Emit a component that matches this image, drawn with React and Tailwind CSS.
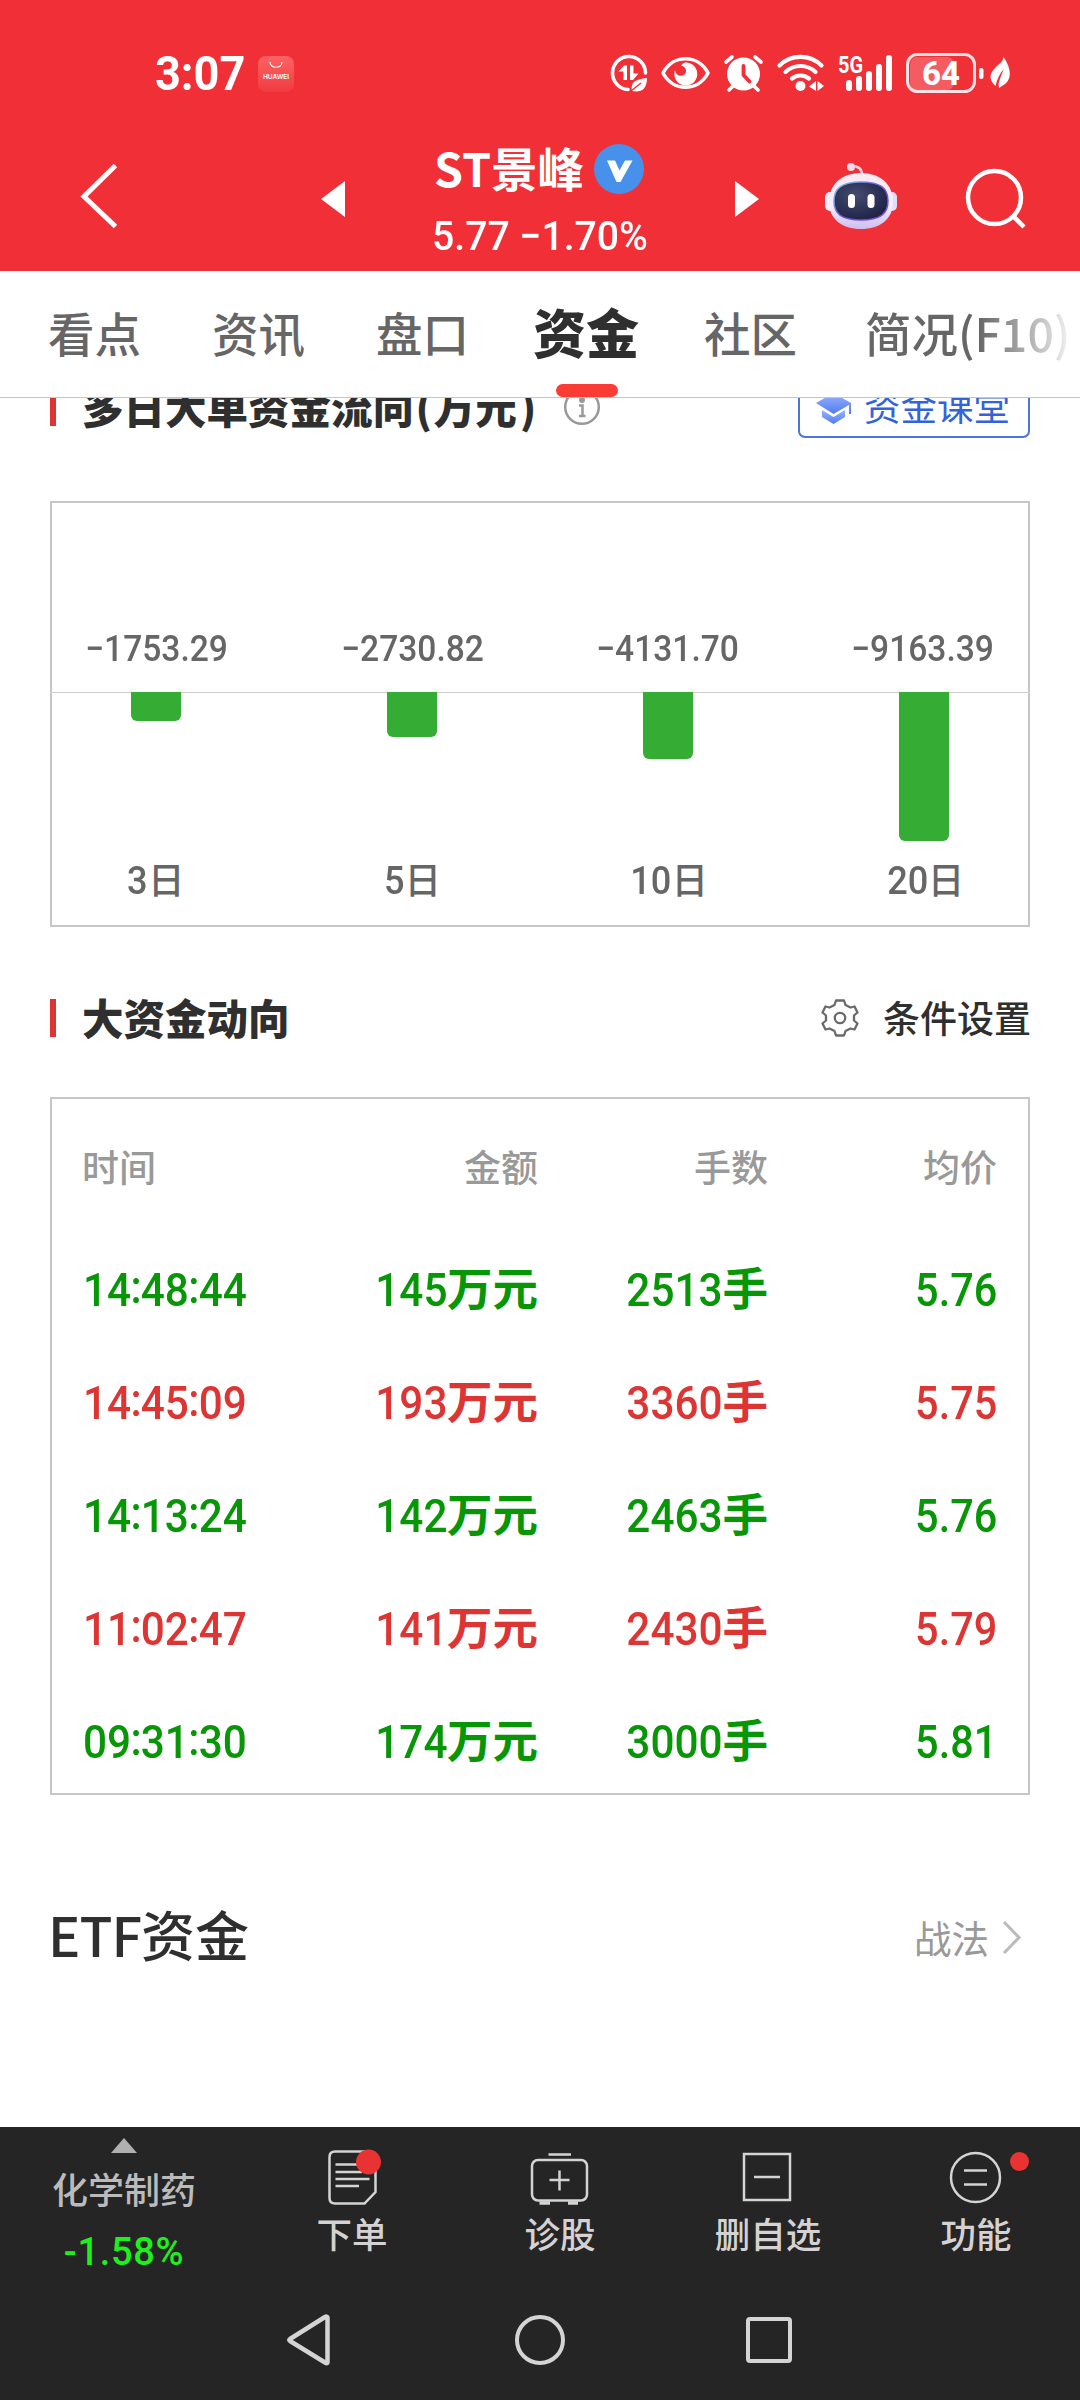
import React from "react";

const days = [
  { value: "−1753.29", n: "3", bar: "h-[29px]" },
  { value: "−2730.82", n: "5", bar: "h-[45px]" },
  { value: "−4131.70", n: "10", bar: "h-[67px]" },
  { value: "−9163.39", n: "20", bar: "h-[149px]" },
];

const trades = [
  { time: "14:48:44", amount: "145", lots: "2513", price: "5.76", color: "text-[#069606]" },
  { time: "14:45:09", amount: "193", lots: "3360", price: "5.75", color: "text-[#dd3434]" },
  { time: "14:13:24", amount: "142", lots: "2463", price: "5.76", color: "text-[#069606]" },
  { time: "11:02:47", amount: "141", lots: "2430", price: "5.79", color: "text-[#dd3434]" },
  { time: "09:31:30", amount: "174", lots: "3000", price: "5.81", color: "text-[#069606]" },
];

function Num({ children, className = "" }) {
  return (
    <span className={"inline-block font-['Roboto',sans-serif] " + className}>{children}</span>
  );
}

function StatusBar() {
  return (
    <div className="flex h-[96px] pt-[48px] text-white">
      <div className="ml-[155px] flex w-[103px] items-center h-[51px]">
        <Num className="origin-left scale-x-[0.92] text-[49px] leading-[51px] font-bold">3:07</Num>
      </div>
      <div className="mt-[8px] flex h-[36px] w-[36px] flex-col items-center rounded-[8px] bg-linear-to-b from-[#fd6262] to-[#f03a42]">
        <svg width="14" height="8" viewBox="0 0 14 8" className="mt-[5px]" fill="none" stroke="white" strokeWidth="1.2">
          <path d="M1 1 C1 8 13 8 13 1" />
        </svg>
        <span className="mt-[4px] font-['Inter',sans-serif] text-[6.500px] leading-[9px] font-semibold">HUAWEI</span>
      </div>
      <svg className="ml-[312px]" width="410" height="48" viewBox="606 48 410 48" fill="none" stroke="white">
        <path d="M645.5 73 A16.5 16.5 0 1 0 628 89.500" strokeWidth="3.600" strokeLinecap="round" />
        <path d="M618.500 71.500 L624 65.500 H627 V80 H623.500 V71.500Z M630 65.500 H633.500 V73.500 H638.500 L633 80 H630Z" fill="white" stroke="none" />
        <path d="M632 91 C630 82 636 79 647 78 C647 89 641 93 632 91Z" fill="white" stroke="none" />
        <path d="M631 91 L641 83" stroke="#f12f37" strokeWidth="1.500" />
        <path d="M663 73 C673 54 698 54 708 73 C698 92 673 92 663 73Z" strokeWidth="3.600" strokeLinejoin="round" />
        <path d="M685 62.500 A11.500 11.500 0 1 1 675 70 C676 78 686 77 686 71 C686 68 684 66 681 66 Q682 63 685 62.500Z" fill="white" stroke="none" />
        <circle cx="743.500" cy="74" r="16.500" fill="white" stroke="none" />
        <path d="M726 62 L732 57 M761 62 L755 57 M733 86 L729 90 M754 86 L758 90" strokeWidth="3.600" strokeLinecap="round" />
        <path d="M743.500 66 V75 L749.500 81.500" stroke="#f12f37" strokeWidth="3.800" strokeLinecap="round" />
        <path d="M779.500 65.500 C791 54 810 54 821.500 65.500 M785.500 72 C794 64 807 64 815.500 72 M792 78.500 C797 74.500 804 74.500 809 78.500" strokeWidth="4.200" strokeLinecap="round" />
        <circle cx="800.500" cy="86" r="5" fill="white" stroke="none" />
        <path d="M809 86.500 L816 81 V91Z M817.500 81 L824 86 L817.500 91Z" fill="white" stroke="none" />
        <path d="M849 83 V88 M859 79 V88 M869 74 V88 M879 67 V88 M889 58 V88" strokeWidth="6" strokeLinecap="round" />
        <text x="838" y="73" fill="white" stroke="none" fontSize="23" fontWeight="700" textLength="25" lengthAdjust="spacingAndGlyphs" className="font-['Roboto',sans-serif]">5G</text>
        <rect x="910" y="57" width="44" height="33" rx="7" fill="white" fillOpacity="0.22" stroke="none" />
        <rect x="907.500" y="54.500" width="67" height="37" rx="10" strokeWidth="3" strokeOpacity="0.850" />
        <text x="922" y="85" fill="white" stroke="none" fontSize="34" fontWeight="800" textLength="38" lengthAdjust="spacingAndGlyphs" className="font-['Roboto',sans-serif]">64</text>
        <rect x="979" y="68" width="4.500" height="11" rx="2" fill="white" stroke="none" />
        <path d="M1003.500 57 C1010 66 1013 78 1005 84 L999 88 L998.500 84 C1000 78 1002 73 1004 69 C1000 73 997 79 995.500 86 C988 79 990 73 995 68 C999 64 1003 62 1003.500 57Z" fill="white" stroke="none" />
      </svg>
    </div>
  );
}

function Robot() {
  return (
    <svg width="74" height="68" viewBox="824 162 74 68">
      <defs>
        <linearGradient id="shell" x1="0" y1="0" x2="0" y2="1">
          <stop offset="0" stopColor="#fdeaf2" />
          <stop offset="0.6" stopColor="#f2effd" />
          <stop offset="1" stopColor="#cdbdf0" />
        </linearGradient>
        <linearGradient id="rim" x1="0" y1="0" x2="1" y2="1">
          <stop offset="0" stopColor="#76d5e8" />
          <stop offset="0.5" stopColor="#7050d8" />
          <stop offset="1" stopColor="#7d4be0" />
        </linearGradient>
        <radialGradient id="visor" cx="0.4" cy="0.35" r="0.7">
          <stop offset="0" stopColor="#454c70" />
          <stop offset="1" stopColor="#1c2145" />
        </radialGradient>
      </defs>
      <path d="M852 166 C858 166 862 168 862 175" fill="none" stroke="#f5cfe0" strokeWidth="2.500" />
      <circle cx="851" cy="167" r="4" fill="#f7d8e6" />
      <rect x="825" y="192" width="10" height="19" rx="5" fill="#f6eefc" />
      <rect x="887" y="192" width="10" height="19" rx="5" fill="#e3dbfa" />
      <path d="M861 173 C880 173 893 184 893 202 C893 219 880 229 861 229 C842 229 829 219 829 202 C829 184 842 173 861 173Z" fill="url(#shell)" />
      <path d="M861 182 C880 182 888 188 888 201 C888 214 880 220 861 220 C842 220 834 214 834 201 C834 188 842 182 861 182Z" fill="url(#visor)" stroke="url(#rim)" strokeWidth="1.500" />
      <rect x="848" y="194" width="7" height="14" rx="3.500" fill="white" />
      <rect x="867.500" y="194" width="7" height="14" rx="3.500" fill="white" />
    </svg>
  );
}

function TitleBar() {
  return (
    <div className="flex h-[175px] items-start text-white">
      <svg className="mt-[64px] ml-[78px]" width="44" height="72" viewBox="78 160 44 72" fill="none" stroke="white" strokeWidth="5">
        <path d="M115.500 165.500 L84 196.500 L115.500 226.500" />
      </svg>
      <svg className="mt-[85px] ml-[199px]" width="24" height="36" viewBox="0 0 24 36" fill="white"><path d="M0 18 L24 0 V36Z" /></svg>
      <div className="ml-[87px] flex w-[216px] flex-col pt-[45px]">
        <div className="flex items-center whitespace-nowrap text-[46.500px] leading-[60px] font-bold">
          <span className="-mt-[4px] ml-[2px] w-[152px]">ST景峰</span>
          <svg className="ml-[8px]" width="50" height="50" viewBox="0 0 50 50">
            <circle cx="25" cy="25" r="25" fill="#4891eb" />
            <path d="M13 16.500 H21 L25.500 26.500 L31 16.500 H38.500 L26.500 38 H22.500 Z" fill="white" />
          </svg>
        </div>
        <Num className="mt-[12px] origin-left scale-x-[0.955] whitespace-nowrap text-[41px] leading-[54px] font-medium">5.77 −1.70%</Num>
      </div>
      <svg className="mt-[85px] ml-[87px]" width="24" height="36" viewBox="0 0 24 36" fill="white"><path d="M24 18 L0 0 V36Z" /></svg>
      <div className="mt-[66px] ml-[65px]"><Robot /></div>
      <svg className="mt-[70px] ml-[64px]" width="68" height="68" viewBox="962 166 68 68" fill="none" stroke="white" strokeWidth="4.500">
        <circle cx="994.500" cy="197.500" r="26.500" />
        <path d="M1013 216 L1024 227" />
      </svg>
    </div>
  );
}

function Tabs() {
  return (
    <div className="relative z-10 flex h-[127px] items-center border-b border-[#c6c6c6] bg-white pb-[4px] whitespace-nowrap text-[46.500px] leading-[60px] font-medium text-[#666]">
      <span className="ml-[48px] w-[164px]">看点</span>
      <span className="w-[164px]">资讯</span>
      <span className="w-[157px]">盘口</span>
      <div className="relative w-[171px]">
        <span className="text-[53px] font-black text-[#2f2f2f]">资金</span>
        <div className="absolute top-[83px] left-[23px] h-[13px] w-[62px] rounded-full bg-[#fb3c34]" />
      </div>
      <span className="w-[161px]">社区</span>
      <span className="bg-linear-to-r from-[#666] from-[55%] to-[#f2f2f2] bg-clip-text text-transparent">简况(F10)</span>
    </div>
  );
}

function SectionTitle({ children }) {
  return (
    <div className="flex items-center">
      <div className="h-[38px] w-[6px] bg-[#dd3434]" />
      <span className="-mt-[3px] ml-[26px] whitespace-nowrap text-[41.500px] leading-[56px] font-black text-[#2f2f2f]">{children}</span>
    </div>
  );
}

function FlowHeader() {
  return (
    <div className="-mt-[22px] flex h-[62px] items-center pr-[50px] pl-[50px]">
      <SectionTitle>多日大单资金流向<span className="mx-[1.500px]">(</span>万元<span className="ml-[3px]">)</span></SectionTitle>
      <svg className="ml-[27px]" width="38" height="38" viewBox="0 0 38 38" fill="none" stroke="#999" strokeWidth="2.500">
        <circle cx="19" cy="19" r="16.800" />
        <circle cx="19" cy="12" r="3" fill="#999" stroke="none" />
        <path d="M16 17.500 H19.500 V28 M16 28 H22.500" />
      </svg>
      <div className="ml-auto flex h-[62px] w-[232px] items-center rounded-[7px] border-2 border-[#4a74de] pl-[16px]">
        <svg width="36" height="36" viewBox="0 0 36 36">
          <defs>
            <linearGradient id="cap" x1="0" y1="0" x2="0" y2="1">
              <stop offset="0" stopColor="#9ab4fb" />
              <stop offset="1" stopColor="#4f7cf3" />
            </linearGradient>
          </defs>
          <path d="M0 14 L17.500 4 L35 14 V25 H33 V16 L17.500 25Z" fill="url(#cap)" />
          <path d="M6 21 L17.500 28 L29 21 V28 L17.500 35 L6 28Z" fill="url(#cap)" />
        </svg>
        <span className="-mt-[3px] ml-[12px] text-[36.500px] leading-[50px] text-[#3262dc]">资金课堂</span>
      </div>
    </div>
  );
}

function FlowChart() {
  return (
    <div className="mx-[50px] mt-[63px] h-[426px] border-2 border-[#c6c6c6] font-medium text-[#666]">
      <div className="-mx-[2px] flex h-[190px] items-end justify-between border-b border-[#d0d0d0] pb-[21px]">
        {days.map((d) => (
          <div key={d.n} className="flex w-[214px] justify-center">
            <Num className="scale-x-[0.92] text-[36.500px] leading-[44px]">{d.value}</Num>
          </div>
        ))}
      </div>
      <div className="-mx-[2px] -mt-px flex h-[150px] justify-between">
        {days.map((d) => (
          <div key={d.n} className="flex w-[212px] justify-center">
            <div className={"w-[50px] rounded-b-[6px] bg-[#35ad35] " + d.bar} />
          </div>
        ))}
      </div>
      <div className="-mx-[2px] mt-[11px] flex justify-between">
        {days.map((d) => (
          <div key={d.n} className="flex w-[211px] items-baseline justify-center text-[36.500px] leading-[52px]">
            <Num className="origin-right scale-x-[0.95] text-[38px]">{d.n}</Num>
            <span>日</span>
          </div>
        ))}
      </div>
    </div>
  );
}

function Gear() {
  return (
    <svg width="38" height="40" viewBox="-19 -20 38 40" fill="none" stroke="#6a6a6a" strokeWidth="2.300" strokeLinejoin="round">
      <path d="M-4 -17.500 H4 L5.500 -13 L10.500 -10.500 L14.500 -11.500 L17.500 -5.500 L14 -2.500 V2.500 L17.500 5.500 L14.500 11.500 L10.500 10.500 L5.500 13 L4 17.500 H-4 L-5.500 13 L-10.500 10.500 L-14.500 11.500 L-17.500 5.500 L-14 2.500 V-2.500 L-17.500 -5.500 L-14.500 -11.500 L-10.500 -10.500 L-5.500 -13Z" />
      <circle r="5.200" />
    </svg>
  );
}

function Time({ value }) {
  return (
    <Num className="origin-left scale-x-[0.92] text-[46px]">
      {value.split(":").map((part, i) => (
        <React.Fragment key={i}>
          {i > 0 && <span className="relative -top-[3px] -mx-[0.800px]">:</span>}
          {part}
        </React.Fragment>
      ))}
    </Num>
  );
}

function Trades() {
  return (
    <div className="mx-[50px] mt-[51px] h-[698px] border-2 border-[#c6c6c6] pt-[44px] pr-[31px] pl-[30px]">
      <div className="flex h-[47px] items-center text-[37px] leading-[47px] font-medium text-[#999]">
        <span className="w-[226px]">时间</span>
        <span className="w-[230px] text-right">金额</span>
        <span className="w-[230px] text-right">手数</span>
        <span className="flex-1 text-right">均价</span>
      </div>
      <div className="mt-[41px]">
        {trades.map((t) => (
          <div key={t.time} className={"flex h-[113px] items-center whitespace-nowrap text-[45.500px] leading-[60px] font-medium " + t.color}>
            <div className="w-[226px] pl-px"><Time value={t.time} /></div>
            <div className="w-[230px] text-right"><Num className="origin-right scale-x-[0.92] text-[46px]">{t.amount}</Num><span className="font-bold">万元</span></div>
            <div className="w-[230px] text-right"><Num className="origin-right scale-x-[0.92] text-[46px]">{t.lots}</Num><span className="font-bold">手</span></div>
            <div className="flex-1 text-right"><Num className="origin-right scale-x-[0.9] text-[46px]">{t.price}</Num></div>
          </div>
        ))}
      </div>
    </div>
  );
}

function BottomItem({ label, children }) {
  return (
    <div className="flex w-[208px] flex-col items-center pt-[18px] text-[35.500px] leading-[48px] font-medium text-[#d4d2d2]">
      {children}
      <span>{label}</span>
    </div>
  );
}

function BottomBar() {
  return (
    <div className="flex h-[273px] flex-col bg-[#252525]">
      <div className="flex h-[160px]">
        <div className="flex w-[248px] flex-col items-center pt-[11px]">
          <svg width="26" height="15" viewBox="0 0 26 15" fill="#b0b0b0"><path d="M13 0 L26 15 H0Z" /></svg>
          <span className="mt-[11px] text-[36px] leading-[48px] font-medium text-[#bbb]">化学制药</span>
          <Num className="mt-[16px] text-[38px] leading-[48px] font-medium tracking-[0.700px] text-[#1ef01e]">-1.58%</Num>
        </div>
        <BottomItem label="下单">
          <svg width="60" height="64" viewBox="322 2145 60 64" fill="none" stroke="#d4d4d4" strokeWidth="2.500">
            <path d="M335 2151.500 H370 Q375.500 2151.500 375.500 2157 V2192 L364.500 2203.500 H335 Q329.500 2203.500 329.500 2198 V2157 Q329.500 2151.500 335 2151.500Z" />
            <path d="M335.500 2164.500 H362 M335.500 2172 H362 M335.500 2179 H369.500 M335.500 2186 H359" />
            <circle cx="368.500" cy="2162" r="12.500" fill="#e93232" stroke="none" />
          </svg>
        </BottomItem>
        <BottomItem label="诊股">
          <svg width="60" height="64" viewBox="530 2145 60 64" fill="none" stroke="#d4d4d4" strokeWidth="2.500">
            <rect x="532" y="2160" width="55" height="40.500" rx="6" />
            <path d="M548.500 2154.500 H571 M549.500 2180 H569.500 M559.500 2170.500 V2190.500" />
            <path d="M539.500 2203 H550 M568 2203 H578" strokeWidth="3.500" />
          </svg>
        </BottomItem>
        <BottomItem label="删自选">
          <svg width="60" height="64" viewBox="738 2145 60 64" fill="none" stroke="#d4d4d4" strokeWidth="2.500">
            <rect x="744" y="2154" width="46" height="46" />
            <path d="M754 2177 H780" />
          </svg>
        </BottomItem>
        <BottomItem label="功能">
          <div className="relative">
            <svg width="60" height="64" viewBox="946 2145 60 64" fill="none" stroke="#d4d4d4" strokeWidth="2.500">
              <circle cx="975.500" cy="2177.500" r="24.500" />
              <path d="M964 2170.500 H987 M964 2184.500 H987" />
            </svg>
            <div className="absolute top-[7px] left-[64px] h-[19px] w-[19px] rounded-full bg-[#e93232]" />
          </div>
        </BottomItem>
      </div>
      <div className="mt-[26px] flex items-center">
        <svg className="ml-[285px]" width="48" height="54" viewBox="285 2313 48 54" fill="none" stroke="#d4d4d4" strokeWidth="4.500" strokeLinejoin="round">
          <path d="M327.500 2317.500 V2362.500 Q327 2364 325 2362.500 L290 2341 Q288.500 2340 290 2339 L325 2317 Q327 2316 327.500 2317.500Z" />
        </svg>
        <div className="ml-[182px] h-[50px] w-[50px] rounded-full border-[4.500px] border-[#d4d4d4]" />
        <div className="ml-[181px] h-[46px] w-[46px] rounded-[4px] border-[4.500px] border-[#d4d4d4]" />
      </div>
    </div>
  );
}

export default function App() {
  return (
    <div className="flex h-[2400px] w-[1080px] flex-col overflow-hidden bg-white font-['Noto_Sans_CJK_SC',sans-serif]">
      <div className="h-[271px] bg-[#f12f37]">
        <StatusBar />
        <TitleBar />
      </div>
      <Tabs />
      <FlowHeader />
      <FlowChart />
      <div className="mt-[63px] flex h-[56px] items-center justify-between pr-[49px] pl-[50px]">
        <SectionTitle>大资金动向</SectionTitle>
        <div className="flex items-center">
          <Gear />
          <span className="-mt-[3px] ml-[24px] text-[37px] leading-[50px] font-medium text-[#2f2f2f]">条件设置</span>
        </div>
      </div>
      <Trades />
      <div className="mt-[104px] flex h-[70px] items-center justify-between pr-[58px] pl-[48px]">
        <span className="text-[54px] leading-[70px] font-medium text-[#2f2f2f]"><span className="tracking-[-1px]">ETF</span>资金</span>
        <div className="mt-[6px] flex items-center">
          <span className="text-[37.500px] leading-[50px] text-[#999]">战法</span>
          <svg className="ml-[13px]" width="20" height="34" viewBox="0 0 20 34" fill="none" stroke="#bbb" strokeWidth="3"><path d="M2 2 L17 17.500 L2 33" /></svg>
        </div>
      </div>
      <div className="flex-1" />
      <BottomBar />
    </div>
  );
}
